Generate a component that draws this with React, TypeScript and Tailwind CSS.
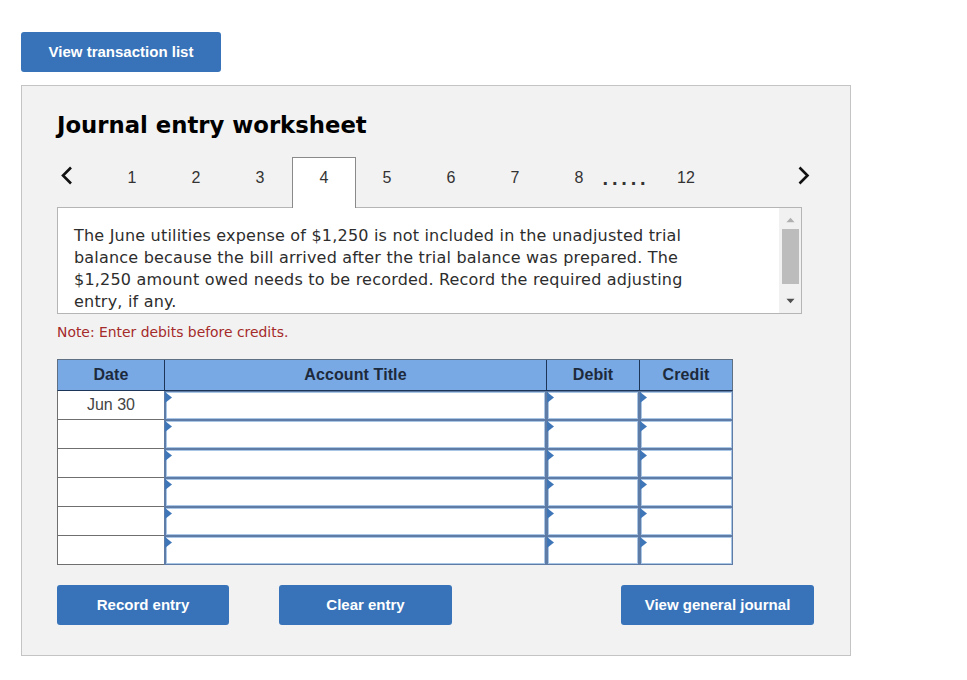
const sans = "font-['Liberation_Sans',Arial,sans-serif]";
const dj = "font-['DejaVu_Sans',Verdana,sans-serif]";

function Btn({ label, w }: { label: string; w: string }) {
  return (
    <button className={`${w} h-10 rounded-[3px] bg-[#3873b9] text-white text-[15px] font-bold pt-[1px] ${sans} flex items-center justify-center`}>
      {label}
    </button>
  );
}

function Cell({ w }: { w: string }) {
  return (
    <div className={`${w} relative h-[29px] bg-[#5f7ca6] pl-[2px] pr-[1px] py-[1px]`}>
      <div className="h-full bg-white border border-[#a9c6e6]" />
      <svg className="absolute left-0 top-[1px]" width="9" height="12" viewBox="0 0 9 12">
        <path d="M1 0 L8 5.5 L1 11 Z" fill="#3f76b8" />
      </svg>
    </div>
  );
}

function Tab({ n, active, after }: { n: string; active?: boolean; after?: boolean }) {
  return (
    <div className={`w-[64px] h-[51px] flex items-center justify-center pb-[10px] text-[16px] text-[#333] ${after ? "pr-[2px]" : ""} ${sans} ${active ? "bg-white border border-b-0 border-[#8a8a8a] relative z-10" : ""}`}>
      {n}
    </div>
  );
}

export default function App() {
  const rows = [0, 1, 2, 3, 4, 5];
  return (
    <div className="min-h-[680px] w-[967px] bg-white pl-[21px] pt-[32px]">
      <Btn label="View transaction list" w="w-[200px]" />
      <div className="mt-[13px] w-[830px] h-[571px] border border-[#c4c4c4] bg-[#f2f2f2] pl-[35px] pt-[23px]">
        <h1 className={`${dj} text-[22.75px] leading-[32px] font-bold text-black`}>Journal entry worksheet</h1>
        <div className="mt-[16px] flex h-[51px] w-[745px] items-start">
          <div className="w-[43px] h-[38px] flex items-center pl-[1px]">
            <svg width="20" height="24" viewBox="0 0 20 24" fill="none" stroke="#111" strokeWidth="2.6">
              <path d="M13 3.5 L5 11.5 L13 19.5" />
            </svg>
          </div>
          <div className="flex">
            {["1", "2", "3"].map((n) => <Tab key={n} n={n} />)}
            <Tab n="4" active />
            {["5", "6", "7", "8"].map((n) => <Tab key={n} n={n} after />)}
          </div>
          <div className={`w-[44px] h-[50px] flex items-center justify-center pb-[8px] -ml-[8px] text-[20px] font-bold tracking-[3.8px] text-[#333] ${sans}`}>.....</div>
          <div className={`w-[64px] h-[50px] ml-[6px] flex items-center justify-center pb-[8px] text-[16px] text-[#333] ${sans}`}>12</div>
          <div className="ml-auto h-[38px] flex items-center translate-x-[12px]">
            <svg width="20" height="24" viewBox="0 0 20 24" fill="none" stroke="#111" strokeWidth="2.6">
              <path d="M5.5 3.5 L13.5 11.5 L5.5 19.5" />
            </svg>
          </div>
        </div>
        <div className="-mt-px w-[745px] h-[107px] border border-[#b5b5b5] bg-white flex">
          <p className={`${dj} flex-1 pl-[16px] pt-[17px] pr-[90px] text-[16px] leading-[22px] tracking-[0.2px] text-[#2d2d2d]`}>
            The June utilities expense of $1,250 is not included in the unadjusted trial balance because the bill arrived after the trial balance was prepared. The $1,250 amount owed needs to be recorded. Record the required adjusting entry, if any.
          </p>
          <div className="w-[22px] bg-[#f1f1f1] flex flex-col items-center px-[3px]">
            <svg className="mt-[9px]" width="9" height="6" viewBox="0 0 10 6"><path d="M5 0.5 L9.5 5.5 L0.5 5.5 Z" fill="#b0b0b0" /></svg>
            <div className="mt-[6px] w-[17px] h-[55px] bg-[#bcbcbc]" />
            <svg className="mt-[14px]" width="9" height="6" viewBox="0 0 10 6"><path d="M0.5 0.5 L9.5 0.5 L5 5.5 Z" fill="#505050" /></svg>
          </div>
        </div>
        <p className={`${dj} mt-[9px] text-[13.9px] leading-[18px] text-[#a52a2a]`}>Note: Enter debits before credits.</p>
        <div className="mt-[18px] w-[676px]">
          <div className={`flex h-[32px] bg-[#78a9e4] border border-[#5f6f84] border-b-[#1d3557] text-[16px] tracking-[0.1px] font-bold text-[#1d2a3c] ${sans}`}>
            <div className="w-[107px] flex items-center justify-center border-r border-[#1d3557]">Date</div>
            <div className="w-[382px] flex items-center justify-center border-r border-[#1d3557]">Account Title</div>
            <div className="w-[93px] flex items-center justify-center border-r border-[#1d3557]">Debit</div>
            <div className="flex-1 flex items-center justify-center">Credit</div>
          </div>
          {rows.map((r) => (
            <div key={r} className="flex">
              <div className={`w-[107px] h-[29px] bg-white border-l border-b border-[#6f6f6f] flex items-center justify-center text-[16px] text-[#444] pb-[1px] ${sans}`}>
                {r === 0 ? "Jun 30" : ""}
              </div>
              <Cell w="w-[382px]" />
              <Cell w="w-[93px]" />
              <Cell w="w-[94px]" />
            </div>
          ))}
        </div>
        <div className="mt-[20px] flex w-[757px]">
          <Btn label="Record entry" w="w-[172px]" />
          <div className="ml-[50px]"><Btn label="Clear entry" w="w-[173px]" /></div>
          <div className="ml-auto"><Btn label="View general journal" w="w-[193px]" /></div>
        </div>
      </div>
    </div>
  );
}
